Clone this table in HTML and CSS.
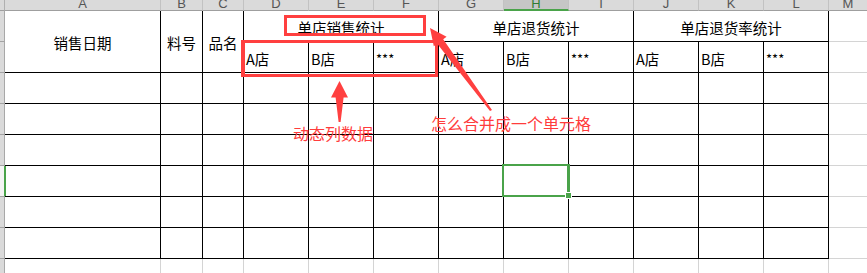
FILE: index.html
```html
<!DOCTYPE html>
<html lang="zh">
<head>
<meta charset="utf-8">
<title>Sheet</title>
<link rel="stylesheet" href="styles.css">
</head>
<body>
<div class="sheet">
  <div class="corner"></div>
  <div class="ch"><span>A</span></div>
  <div class="ch"><span>B</span></div>
  <div class="ch"><span>C</span></div>
  <div class="ch"><span>D</span></div>
  <div class="ch"><span>E</span></div>
  <div class="ch"><span>F</span></div>
  <div class="ch"><span>G</span></div>
  <div class="ch on"><span>H</span></div>
  <div class="ch"><span>I</span></div>
  <div class="ch"><span>J</span></div>
  <div class="ch"><span>K</span></div>
  <div class="ch"><span>L</span></div>
  <div class="ch last"><span>M</span></div>

  <div class="rh"></div>
  <div class="c r2 mid">销售日期</div>
  <div class="c r2 mid">料号</div>
  <div class="c r2 mid">品名</div>
  <div class="c s3 mid top">单店销售统计</div>
  <div class="c s3 mid top">单店退货统计</div>
  <div class="c s3 mid top">单店退货率统计</div>
  <div class="m"></div>

  <div class="rh"></div>
  <div class="c lft sub">A店</div>
  <div class="c lft sub">B店</div>
  <div class="c lft sub star">***</div>
  <div class="c lft sub">A店</div>
  <div class="c lft sub">B店</div>
  <div class="c lft sub star">***</div>
  <div class="c lft sub">A店</div>
  <div class="c lft sub">B店</div>
  <div class="c lft sub star">***</div>
  <div class="m"></div>

  <div class="rh"></div>
  <div class="c"></div><div class="c"></div><div class="c"></div><div class="c"></div><div class="c"></div><div class="c"></div><div class="c"></div><div class="c"></div><div class="c"></div><div class="c"></div><div class="c"></div><div class="c"></div>
  <div class="m"></div>

  <div class="rh"></div>
  <div class="c"></div><div class="c"></div><div class="c"></div><div class="c"></div><div class="c"></div><div class="c"></div><div class="c"></div><div class="c"></div><div class="c"></div><div class="c"></div><div class="c"></div><div class="c"></div>
  <div class="m"></div>

  <div class="rh"></div>
  <div class="c"></div><div class="c"></div><div class="c"></div><div class="c"></div><div class="c"></div><div class="c"></div><div class="c"></div><div class="c"></div><div class="c"></div><div class="c"></div><div class="c"></div><div class="c"></div>
  <div class="m"></div>

  <div class="rh on"></div>
  <div class="c"></div><div class="c"></div><div class="c"></div><div class="c"></div><div class="c"></div><div class="c"></div><div class="c"></div><div class="c"></div><div class="c"></div><div class="c"></div><div class="c"></div><div class="c"></div>
  <div class="m"></div>

  <div class="rh"></div>
  <div class="c"></div><div class="c"></div><div class="c"></div><div class="c"></div><div class="c"></div><div class="c"></div><div class="c"></div><div class="c"></div><div class="c"></div><div class="c"></div><div class="c"></div><div class="c"></div>
  <div class="m"></div>

  <div class="rh"></div>
  <div class="c"></div><div class="c"></div><div class="c"></div><div class="c"></div><div class="c"></div><div class="c"></div><div class="c"></div><div class="c"></div><div class="c"></div><div class="c"></div><div class="c"></div><div class="c"></div>
  <div class="m"></div>

  <div class="rh last"></div>
  <div class="lt"></div><div class="lt"></div><div class="lt"></div><div class="lt"></div><div class="lt"></div><div class="lt"></div><div class="lt"></div><div class="lt"></div><div class="lt"></div><div class="lt"></div><div class="lt"></div><div class="lt"></div>
  <div></div>

  <div class="selection"><span class="handle"></span></div>

  <div class="redbox box1"></div>
  <div class="redbox box2"></div>
  <svg class="arrows" width="867" height="273" viewBox="0 0 867 273">
    <polygon points="339.5,81 348,97.5 343.6,97.5 340.6,122 338.6,122 335.6,97.5 331,97.5"/>
    <polygon points="430,28 446.6,36.7 443.2,39.2 492,110 490,111 437.2,43.8 433.8,46.3"/>
  </svg>
  <div class="note note1">动态列数据</div>
  <div class="note note2">怎么合并成一个单元格</div>
</div>
</body>
</html>
```
FILE: styles.css
```css
* { box-sizing: border-box; }
html, body { margin: 0; padding: 0; }
body {
  width: 867px;
  height: 273px;
  overflow: hidden;
  background: #fff;
  font-family: "Noto Sans CJK SC", "Noto Sans", sans-serif;
}
.sheet {
  position: relative;
  display: grid;
  grid-template-columns: 5px 156px 42px 41px repeat(9, 65px) 38px;
  grid-template-rows: 11px repeat(8, 31px) 14px;
  height: 273px;
  overflow: hidden;
}
.corner {
  background: #dadada;
  border-right: 1px solid #b0b0b0;
  border-bottom: 1px solid #9f9f9f;
}
.ch {
  background: #dadada;
  border-right: 1px solid #c2c2c2;
  border-bottom: 1px solid #9f9f9f;
  overflow: hidden;
  font-family: "Liberation Sans", Arial, sans-serif;
  font-size: 13px;
  color: #555;
  text-align: center;
}
.ch span { display: block; line-height: 13px; margin-top: -3px; }
.ch.on { background: #c6c6c6; border-bottom: 2px solid #4aa34a; color: #2f7d32; }
.ch.last { border-right: none; }
.rh {
  background: #dadada;
  border-right: 1px solid #a8a8a8;
  border-bottom: 1px solid #a3a3a3;
}
.rh.last { border-bottom: none; }
.rh.on { background: #f4f4f4; border-right: 2px solid #4aa34a; margin-right: -1px; }
.c {
  border-right: 1px solid #000;
  border-bottom: 1px solid #000;
  font-size: 14.5px;
  color: #000;
  display: flex;
  align-items: center;
  white-space: nowrap;
  overflow: visible;
}
.c.mid { justify-content: center; padding-top: 2px; }
.c.top { padding-top: 2px; }
.c.r2 { grid-row: span 2; }
.c.s3 { grid-column: span 3; }
.c.lft { padding-left: 2px; }
.c.sub { padding-top: 3px; }
.c.star { font-size: 13px; }
.m { border-bottom: 1px solid #d4d4d4; }
.lt { border-right: 1px solid #d4d4d4; }

.selection {
  position: absolute;
  left: 502px;
  top: 164px;
  width: 68px;
  height: 33px;
  border: 2px solid #4aa34a;
  border-right-width: 3px;
}
.handle {
  position: absolute;
  right: -5px;
  bottom: -4px;
  width: 7px;
  height: 7px;
  background: #4aa34a;
  border: 1px solid #fff;
}
.redbox {
  position: absolute;
  border: 3px solid #ff3f3f;
}
.box1 { left: 284px; top: 15px; width: 142px; height: 21px; }
.box2 { left: 241px; top: 40px; width: 197px; height: 37px; border-left-width: 4px; }
.arrows { position: absolute; left: 0; top: 0; }
.arrows polygon { fill: #ff4040; }
.note {
  position: absolute;
  color: #ff3c3c;
  font-size: 16px;
  line-height: 20px;
  white-space: nowrap;
}
.note1 { left: 293px; top: 123px; }
.note2 { left: 431px; top: 113px; }
```
